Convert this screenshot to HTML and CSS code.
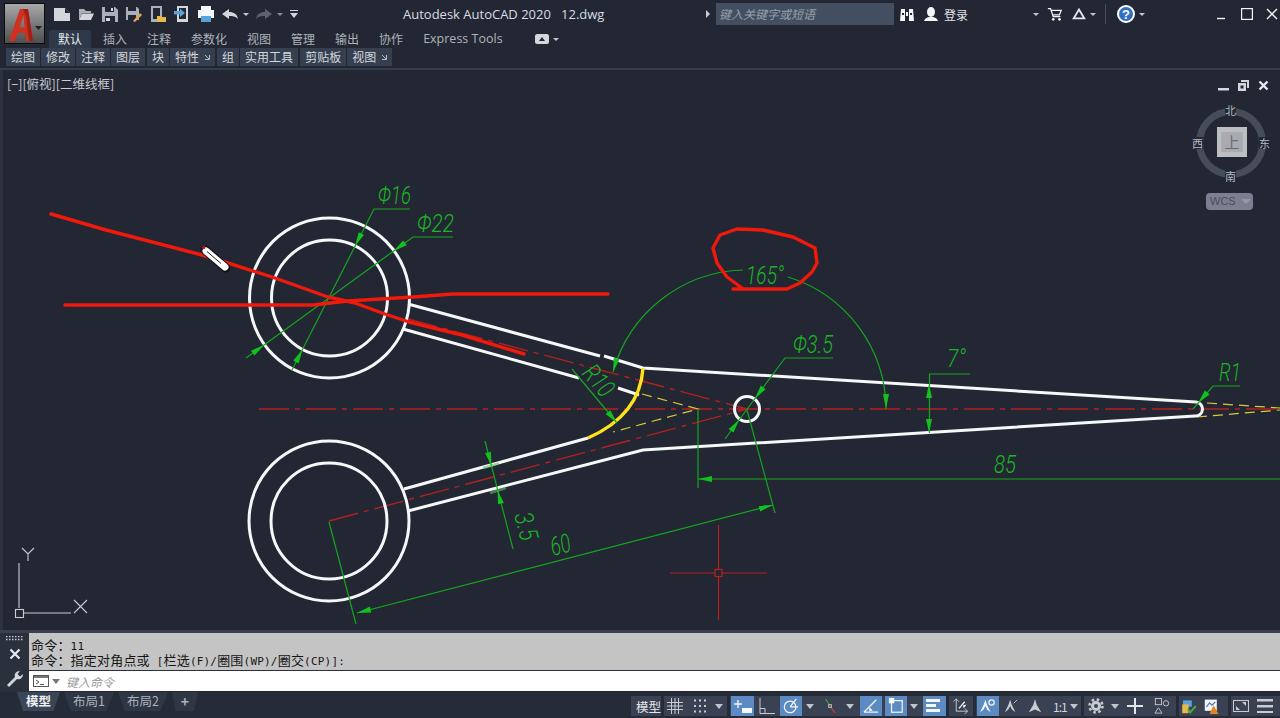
FILE: index.html
```html
<!DOCTYPE html>
<html lang="zh">
<head>
<meta charset="utf-8">
<title>Autodesk AutoCAD 2020</title>
<link rel="stylesheet" href="styles.css">
</head>
<body>
<div class="app">
  <header class="head">
    <div class="logo-col">
      <div class="logo">
        <svg width="40" height="40" viewBox="0 0 40 40"><path class="logo-a" d="M4 37 L15 5 H23 L28 37 H21 L20 29 H13 L10 37 Z M14.5 23.5 H19.5 L18.5 12 Z"/><path class="logo-b" d="M18 5 H23 L28 37 H24 L21 12 Z"/><path class="logo-c" d="M30 22 h7 l-3.5 4 z"/></svg>
      </div>
    </div>
    <div class="head-main">
      <div class="title-row">
        <div class="qat">
          <svg class="i16" viewBox="0 0 16 16"><path class="f-l" d="M0 2 H11 L16 7 V15 H0 Z"/><path class="f-d" d="M11 2 V7 H16 Z"/></svg>
          <svg class="i16" viewBox="0 0 16 16"><path class="f-m" d="M1 14 V3 H6 L8 5 H13 V7 H4 Z"/><path class="f-l" d="M1 14 L4 7.5 H16 L13 14 Z"/></svg>
          <svg class="i16" viewBox="0 0 16 16"><path class="f-m" d="M0 1 H13 L16 4 V16 H0 Z"/><path class="f-b" d="M3 1 H12 V6 H3 Z M3 10 H13 V16 H3 Z"/><path class="f-l" d="M9 2 H11 V5 H9 Z M4 12 H8 V15 H4 Z"/></svg>
          <svg class="i16" viewBox="0 0 16 16"><path class="f-m" d="M0 1 H11 L13 3 V14 H0 Z"/><path class="f-b" d="M2 1 H10 V5 H2 Z M2 9 H10 V14 H2 Z"/><path class="f-o" d="M7 15 L14 7 L16 9 L9 16 Z"/></svg>
          <svg class="i16" viewBox="0 0 16 16"><path class="f-m" d="M1 0 H12 V16 H1 Z"/><path class="f-b" d="M3 2 H10 V13 H3 Z"/><path class="f-y" d="M7 10 H11 L12 11 H16 V16 H7 Z"/></svg>
          <svg class="i16" viewBox="0 0 16 16"><path class="f-l" d="M3 0 H14 V16 H3 Z"/><path class="f-b" d="M5 2 H12 V13 H5 Z"/><path class="f-blue" d="M0 5 H6 V2.5 L11 7 L6 11 V8.5 H0 Z"/></svg>
          <svg class="i16" viewBox="0 0 16 16"><path class="f-w" d="M3 0 H13 V4 H16 V12 H13 V10 H3 V12 H0 V4 H3 Z"/><path class="f-blue" d="M3 10 H13 V16 H3 Z"/></svg>
          <svg class="i16" viewBox="0 0 16 16"><path class="f-l" d="M0 8 L7 3 V6 C12 6 15 8 16 13 C13 10 11 10 7 10 V13 Z"/></svg>
          <span class="caret sm q-c"></span>
          <svg class="i16 q-r" viewBox="0 0 16 16"><path class="f-dim" d="M16 8 L9 3 V6 C4 6 1 8 0 13 C3 10 5 10 9 10 V13 Z"/></svg>
          <span class="caret sm q-c dimmed"></span>
          <svg class="i8 q-r" viewBox="0 0 8 10"><path class="f-l" d="M0 1 H8 V2 H0 Z M0 4 H8 L4 9 Z"/></svg>
        </div>
        <div class="doc-title">Autodesk AutoCAD 2020&nbsp;&nbsp;&nbsp;12.dwg</div>
        <div class="search-group">
          <span class="tri-r"></span>
          <div class="search">键入关键字或短语</div>
          <svg class="i16 ml5" viewBox="0 0 16 16"><path class="f-w" d="M2 3 H6 V15 H1 Z M10 3 H14 L15 15 H10 Z M7 6 H9 V10 H7 Z"/><path class="f-b" d="M3 7 H5 V9 H3 Z M11 7 H13 V9 H11 Z"/></svg>
          <svg class="i16 ml8" viewBox="0 0 16 16"><ellipse class="f-w" cx="8" cy="6" rx="4" ry="5"/><path class="f-w" d="M1 15 C2 12 5 11 6 11 H10 C11 11 14 12 15 15 Z"/></svg>
          <span class="login">登录</span>
          <span class="caret sm ml-login"></span>
          <svg class="i16 ml8" viewBox="0 0 18 16"><path class="st-w" d="M1 2 H4 L7 11 H15 M5 4 H16 L14 9 H7"/><circle class="f-w" cx="7" cy="14" r="1.5"/><circle class="f-w" cx="14" cy="14" r="1.5"/></svg>
          <svg class="i16 ml8" viewBox="0 0 18 16"><path class="st-tri" d="M9 3 L15 13 H3 Z"/></svg>
          <span class="caret sm ml3"></span>
          <span class="sep"></span>
          <svg class="i20" viewBox="0 0 20 20"><circle class="f-help" cx="10" cy="10" r="8"/><text class="help-q" x="10" y="15">?</text></svg>
          <span class="caret sm ml3"></span>
          <div class="win-btns">
            <svg class="i12" viewBox="0 0 12 12"><path class="st-w" d="M1 10.5 H9"/></svg>
            <svg class="i12" viewBox="0 0 12 12"><rect class="st-w" x="0.5" y="0.5" width="11" height="11"/></svg>
            <svg class="i12" viewBox="0 0 12 12"><path class="st-w" d="M1 1 L11 11 M11 1 L1 11"/></svg>
          </div>
        </div>
      </div>
      <nav class="tabs">
        <span class="tab active">默认</span>
        <span class="tab">插入</span>
        <span class="tab">注释</span>
        <span class="tab">参数化</span>
        <span class="tab">视图</span>
        <span class="tab">管理</span>
        <span class="tab">输出</span>
        <span class="tab">协作</span>
        <span class="tab latin">Express Tools</span>
        <span class="tab-extra"><svg class="i14" viewBox="0 0 14 10"><path class="f-l" d="M0 2 C0 1 1 0 2 0 H12 C13 0 14 1 14 2 V8 C14 9 13 10 12 10 H2 C1 10 0 9 0 8 Z"/><path class="f-b" d="M4 7 L7 3 L10 7 Z"/></svg><span class="caret sm"></span></span>
      </nav>
    </div>
  </header>

  <div class="panels">
    <span class="panel">绘图</span>
    <span class="panel">修改</span>
    <span class="panel">注释</span>
    <span class="panel">图层</span>
    <span class="panel gapl">块</span>
    <span class="panel">特性<svg class="launch" viewBox="0 0 6 6"><path class="st-launch" d="M5.5 1 V5.5 H1 M1 1 L5 5"/></svg></span>
    <span class="panel gapl">组</span>
    <span class="panel">实用工具</span>
    <span class="panel gapl">剪贴板</span>
    <span class="panel">视图<svg class="launch" viewBox="0 0 6 6"><path class="st-launch" d="M5.5 1 V5.5 H1 M1 1 L5 5"/></svg></span>
  </div>

  <main class="canvas">
    <svg class="drawing" width="1280" height="560" viewBox="0 70 1280 560">
      <g class="red-c">
        <path d="M259 409 H1280"/>
        <path d="M329 521 L747 409"/>
        <path d="M408 319 L747 409"/>
      </g>
      <g class="yel-d">
        <path d="M642 394 L698 409 L613 432"/>
        <path d="M1207 403 L1280 408 M1197 417 L1280 410"/>
      </g>
      <g class="white">
        <circle cx="329.5" cy="298" r="80"/>
        <circle cx="329.5" cy="298" r="58"/>
        <circle cx="329" cy="521" r="80"/>
        <circle cx="329" cy="521" r="58"/>
        <circle cx="747" cy="409" r="12.5"/>
        <path d="M408 304 L600 356 M604 356 L643 368 L1196 402"/>
        <path d="M403 329 L579 378 M618 388 L639 395"/>
        <path d="M1196 402 A7 7 0 0 1 1195 416 L643 450 L408 511"/>
        <path d="M404 489 L588 438"/>
      </g>
      <path class="yellow" d="M643 368 Q640 415 588 438"/>
      <g class="green">
        <path d="M410 209 H374 L292 370"/>
        <path d="M453 237 H413 L246 358"/>
        <path d="M613 372 A139 139 0 0 1 743 270"/>
        <path d="M788 277 A139 139 0 0 1 886 409"/>
        <path d="M572 369 L617 423"/>
        <path d="M833 358 H785 L725 439"/>
        <path d="M970 374 H929.5 V433"/>
        <path d="M1240 386 H1213 L1193 409"/>
        <path d="M1280 479 H698 M698 409 V488"/>
        <path d="M747 410 L775 513"/>
        <path d="M773 505 L357 613"/>
        <path d="M329 522 L356 624"/>
        <path d="M485 441 L513 549"/>
        <path class="ticks" d="M483 468 L499 463.5 M490 493 L506 488"/>
      </g>
      <g class="arrows">
        <polygon points="355,246 364,235 358.7,232.3"/>
        <polygon points="302.4,349.5 298.7,363.4 293.3,360.6"/>
        <polygon points="393.7,251 406.8,245.2 403.2,240.4"/>
        <polygon points="264.1,344.9 254.6,355.5 251,350.7"/>
        <polygon points="613,372 619.6,359.3 613.8,357.7"/>
        <polygon points="886,409 889,394 883,394"/>
        <polygon points="617,423 610.3,410.3 605.7,414.1"/>
        <polygon points="754.9,398.7 765.6,389.2 760.8,385.6"/>
        <polygon points="739.4,419.6 733.5,432.6 728.7,429"/>
        <polygon points="929,384 932,398 926,398"/>
        <polygon points="929,433 932,419 926,419"/>
        <polygon points="1198,403 1209.5,394.4 1204.9,390.4"/>
        <polygon points="698,479 712,476 712,482"/>
        <polygon points="773,505 760.2,511.4 758.7,505.6"/>
        <polygon points="357,613 371.3,612.4 369.8,606.6"/>
        <polygon points="491.5,466 490.9,451.7 485.1,453.1"/>
        <polygon points="497.5,490 503.9,502.9 498.1,504.3"/>
      </g>
      <g class="dim">
        <text x="378" y="204" textLength="33" lengthAdjust="spacingAndGlyphs">Φ16</text>
        <text x="417" y="232" textLength="37" lengthAdjust="spacingAndGlyphs">Φ22</text>
        <text x="746" y="284" textLength="38" lengthAdjust="spacingAndGlyphs">165°</text>
        <text x="793" y="353" textLength="40" lengthAdjust="spacingAndGlyphs">Φ3.5</text>
        <text x="947" y="367" textLength="19" lengthAdjust="spacingAndGlyphs">7°</text>
        <text x="1219" y="381" textLength="22" lengthAdjust="spacingAndGlyphs">R1</text>
        <text x="994" y="473" textLength="22" lengthAdjust="spacingAndGlyphs">85</text>
        <text transform="translate(581,374) rotate(49)" textLength="33" lengthAdjust="spacingAndGlyphs">R10</text>
        <text transform="translate(553,556) rotate(-15)" textLength="20" lengthAdjust="spacingAndGlyphs">60</text>
        <text transform="translate(514,515) rotate(75)" textLength="28" lengthAdjust="spacingAndGlyphs">3.5</text>
      </g>
      <g class="red-thin">
        <path d="M670 573 H715 M722 573 H767 M718.5 525 V569 M718.5 577 V620"/>
        <rect x="715" y="569.5" width="7" height="7"/>
      </g>
      <g class="ink">
        <path d="M51 214 L106 230 L202 255 L225 262 L275 278 L328 297 L355 303 L382 313 L409 322 L462 335 L524 354"/>
        <path d="M65 305 H313 L348 301 L413 297 L453 294 H608"/>
        <path d="M733 289 H787 L800 283 L812 272 L817 263 L815 248 L793 237 L763 230 L737 229 L720 235 L713 248 L717 263 L727 277 L742 288"/>
      </g>
      <g class="pen">
        <path class="pen-out" d="M205 250 L226 268"/>
        <path class="pen-in" d="M206 251 L225 267"/>
        <path class="pen-line" d="M207 251.5 L221 263.5"/>
        <path class="pen-tip" d="M201 248 L205 245 L205 249 Z"/>
      </g>
      <g class="ucs">
        <path d="M19 563 V608 M24 613 H71"/>
        <rect x="15.5" y="609.5" width="8" height="8"/>
        <path d="M22 548 L28 554 L34 548 M28 554 V561"/>
        <path d="M74 600 L87 613 M87 600 L74 613"/>
      </g>
    </svg>
    <div class="view-label">[−][俯视][二维线框]</div>
    <div class="vp-btns">
      <svg class="vp-i" viewBox="0 0 11 11"><rect class="f-l" x="0" y="8" width="11" height="2.5"/></svg>
      <svg class="vp-i" viewBox="0 0 11 11"><path class="f-l" d="M3 0 H11 V8 H9 V2 H3 Z M0 3 H8 V11 H0 Z"/><path class="f-b" d="M2.5 5.5 H5.5 V8.5 H2.5 Z"/></svg>
      <svg class="vp-i" viewBox="0 0 11 11"><path class="st-x" d="M1.5 1.5 L9.5 9.5 M9.5 1.5 L1.5 9.5"/></svg>
    </div>
    <div class="cube">
      <div class="ring"></div>
      <span class="dir n">北</span>
      <span class="dir s">南</span>
      <span class="dir w">西</span>
      <span class="dir e">东</span>
      <div class="cube-face"><span>上</span></div>
      <div class="wcs">WCS<i class="wcs-tri"></i></div>
    </div>
  </main>

  <section class="cmd">
    <div class="cmd-side">
      <svg class="grip" viewBox="0 0 17 5"><path class="dots" d="M0 0.5 H17 M0 3.5 H17"/></svg>
      <svg class="cmd-x" viewBox="0 0 12 12"><path class="st-x2" d="M1.5 1.5 L10.5 10.5 M10.5 1.5 L1.5 10.5"/></svg>
      <svg class="cmd-w" viewBox="0 0 16 16"><path class="f-l" d="M0 14 L8 6 C7 3 9 0 13 0 L10.5 3 L13 5.5 L16 3 C16 7 13 9 10 8 L2 16 Z"/></svg>
    </div>
    <div class="cmd-main">
      <div class="cmd-log">
        <p class="log-line">命令：<b class="mono">11</b></p>
        <p class="log-line">命令：指定对角点或<b class="mono"> [</b>栏选<b class="mono">(F)/</b>圈围<b class="mono">(WP)/</b>圈交<b class="mono">(CP)]:</b></p>
      </div>
      <div class="cmd-input">
        <svg class="prompt" viewBox="0 0 16 12"><rect class="st-p" x="0.5" y="0.5" width="15" height="11"/><path class="f-p" d="M1 1 H15 V3 H1 Z"/><path class="st-p" d="M3 5 L6 7 L3 9 M7 9.5 H11"/></svg>
        <span class="caret grey"></span>
        <span class="ph">键入命令</span>
      </div>
    </div>
  </section>

  <footer class="status">
    <div class="layouts">
      <span class="ltab on">模型</span>
      <span class="ltab">布局1</span>
      <span class="ltab">布局2</span>
      <span class="ltab plus">+</span>
    </div>
    <div class="tray">
      <div class="grp g-model"><span class="model">模型</span></div>
      <div class="grp g2">
        <svg class="sb16" viewBox="0 0 16 16"><path class="st-s" d="M4.5 0 V16 M8 0 V16 M11.5 0 V16 M0 4.5 H16 M0 8 H16 M0 11.5 H16"/></svg>
        <svg class="sb12 ml11" viewBox="0 0 12 14"><path class="dotted" d="M0 1.5 H12 M0 7 H12 M0 12.5 H12"/></svg>
        <span class="caret ml9"></span>
      </div>
      <div class="grp g3">
        <span class="blue w23"><svg class="sb18" viewBox="0 0 18 16"><path class="st-w" d="M4 2 V10 M0 6 H8"/><rect class="f-w" x="8" y="10" width="10" height="5"/></svg></span>
        <svg class="sb16 ml5" viewBox="0 0 16 16"><path class="st-s" d="M1 0 V15.5 H16 M1 10.5 H6 V15.5"/></svg>
        <span class="blue w22 ml5"><svg class="sb18" viewBox="0 0 18 18"><circle class="st-w" cx="8" cy="10" r="6.5"/><path class="st-w" d="M8 10 L15 1 M8 10 H17"/></svg></span>
        <span class="caret ml4"></span>
        <svg class="sb16 ml8" viewBox="0 0 16 18"><path class="st-g" d="M3 1 L8 9"/><path class="st-r" d="M8 9 L14 17"/><rect class="st-s" x="6.5" y="7.5" width="3" height="3"/></svg>
        <span class="caret ml8"></span>
        <span class="blue w22 ml6"><svg class="sb18" viewBox="0 0 18 18"><path class="st-w" d="M1 16 H17 M1 16 L15 2"/><path class="f-w" d="M7 10 L11 14 L7 15 Z"/></svg></span>
        <span class="blue w22 ml3"><svg class="sb18" viewBox="0 0 18 18"><rect class="st-w" x="4" y="3" width="12" height="13"/><rect class="f-w" x="1" y="0" width="6" height="6"/></svg></span>
        <span class="caret ml3"></span>
        <span class="blue w23 ml5"><svg class="sb18" viewBox="0 0 18 16"><path class="f-w" d="M0 1 H14 V4 H0 Z M0 6 H10 V9 H0 Z M0 11 H14 V14 H0 Z"/></svg></span>
      </div>
      <div class="grp g4">
        <svg class="sb16" viewBox="0 0 16 17"><path class="st-s" d="M4 1 V14 H16 M1 4 L4 1 L7 4 M13 11 L16 14 L13 17"/><path class="st-w" d="M7 11 L13 4"/><path class="f-w" d="M11 8 L15 7 L12 11 Z"/></svg>
      </div>
      <div class="grp g5">
        <span class="blue w22"><svg class="sb18" viewBox="0 0 18 18"><path class="f-w" d="M6 2 L8 8 L12 16 L8 13 L6 9 L4 13 L0 16 L4 8 Z"/><circle class="st-w" cx="13" cy="5" r="3"/></svg></span>
        <svg class="sb16 ml4" viewBox="0 0 16 18"><path class="f-s" d="M7 2 L9 8 L13 16 L9 13 L7 9 L5 13 L1 16 L5 8 Z"/><path class="st-s" d="M11 6 L15 2"/></svg>
        <svg class="sb16 ml8" viewBox="0 0 16 18"><path class="f-s" d="M8 1 L10 8 L15 16 L8 13 L1 16 L6 8 Z"/></svg>
        <span class="scale">1:1</span>
        <span class="caret ml3"></span>
      </div>
      <div class="grp g6">
        <svg class="sb16" viewBox="0 0 16 16"><circle class="gear-o" cx="8" cy="8" r="5"/><circle class="gear-h" cx="8" cy="8" r="2"/><circle class="gear-t" cx="8" cy="8" r="6.5"/></svg>
        <span class="caret ml7"></span>
        <svg class="sb16 ml8" viewBox="0 0 16 16"><path class="st-w2" d="M8 0 V16 M0 8 H16"/></svg>
        <svg class="sb16 ml11" viewBox="0 0 16 18"><rect class="st-s" x="0.5" y="0.5" width="7" height="7"/><circle class="st-s" cx="12.5" cy="6" r="3"/><path class="st-s" d="M4 11 L8 17 H0 Z"/></svg>
      </div>
      <div class="grp g7">
        <svg class="sb18" viewBox="0 0 19 20"><path class="f-blue" d="M2 3 H13 V11 H2 Z"/><path class="f-y" d="M1 8 H9 V19 H1 Z"/><path class="st-gr" d="M8 14 L11 18 L18 10"/></svg>
        <svg class="sb18 ml5" viewBox="0 0 18 20"><path class="f-w" d="M0 2 H15 V16 H0 Z"/><path class="st-b" d="M2 11 L6 6 L9 9 L13 5"/><path class="f-or" d="M11 9 L17 20 H6 Z"/></svg>
      </div>
      <div class="grp g8">
        <svg class="sb16" viewBox="0 0 16 16"><rect class="st-s" x="0.5" y="2.5" width="15" height="11"/><path class="f-s" d="M3 12 V8 L7 12 Z M13 4 V8 L9 4 Z"/></svg>
        <svg class="sb16 ml8" viewBox="0 0 16 14"><path class="f-s" d="M0 0 H16 V2.5 H0 Z M0 6 H16 V8.5 H0 Z M0 12 H16 V14 H0 Z"/></svg>
      </div>
    </div>
  </footer>
</div>
</body>
</html>
```
FILE: styles.css
```css
* { box-sizing: border-box; }
html, body { margin: 0; padding: 0; height: 100%; overflow: hidden; }
body { background: #222733; color: #d5d8de; font-family: "Noto Sans CJK SC", "Open Sans", sans-serif; font-size: 12px; }
.app { width: 1280px; height: 718px; display: flex; flex-direction: column; }

/* header */
.head { display: flex; height: 48px; flex: none; }
.logo-col { width: 50px; padding: 3px 0 0 4px; }
.logo { width: 41px; height: 41px; border: 1px solid #0c0c0c; background: linear-gradient(#a8a8a8, #4e4e4e); }
.logo svg { display: block; }
.logo-a { fill: #d0301f; fill-rule: evenodd; }
.logo-b { fill: #a02016; }
.logo-c { fill: #1d2028; }
.head-main { flex: 1; display: flex; flex-direction: column; }
.title-row { height: 28px; display: flex; align-items: center; flex: none; }
.qat { width: 353px; padding-left: 4px; display: flex; align-items: center; gap: 8px; flex: none; }
.q-c { margin-left: -3px; }
.q-r { margin-left: -1px; }
.doc-title { width: 303px; flex: none; font-family: "Open Sans", sans-serif; font-size: 13px; color: #d9dce2; white-space: nowrap; }
.search-group { flex: 1; display: flex; align-items: center; }
.tri-r { width: 0; height: 0; border-left: 4px solid #c8ccd2; border-top: 4px solid transparent; border-bottom: 4px solid transparent; margin-right: 6px; }
.search { width: 178px; height: 22px; background: #434e60; color: #98a0ac; font-style: italic; font-size: 12px; line-height: 21px; padding-left: 3px; }
.login { margin-left: 5px; width: 24px; color: #e2e4e8; }
.ml-login { margin-left: 65px; }
.sep { width: 1px; height: 20px; background: #454c5a; margin: 0 10px 0 9px; }
.win-btns { margin-left: 71px; display: flex; gap: 13px; align-items: center; }
.i16 { width: 16px; height: 16px; flex: none; }
.i8 { width: 8px; height: 10px; flex: none; }
.i12 { width: 12px; height: 12px; flex: none; }
.i14 { width: 14px; height: 10px; flex: none; }
.i20 { width: 20px; height: 20px; flex: none; }
.ml3 { margin-left: 3px; }
.ml4 { margin-left: 4px; }
.ml5 { margin-left: 5px; }
.ml6 { margin-left: 6px; }
.ml7 { margin-left: 7px; }
.ml8 { margin-left: 8px; }
.ml9 { margin-left: 9px; }
.ml11 { margin-left: 11px; }
.caret { width: 0; height: 0; flex: none; border-top: 5px solid #c2c6cc; border-left: 4px solid transparent; border-right: 4px solid transparent; }
.caret.sm { border-top-width: 3px; border-left-width: 3px; border-right-width: 3px; }
.caret.dimmed { border-top-color: #8a8f99; }
.caret.grey { border-top-color: #777; }
.f-l { fill: #d3d6db; }
.f-m { fill: #aab0b8; }
.f-d { fill: #222733; }
.f-b { fill: #222733; }
.f-w { fill: #f4f6f8; }
.f-o { fill: #e8a050; }
.f-y { fill: #e8b84a; }
.f-blue { fill: #5aa2dc; }
.f-dim { fill: #5c6270; }
.f-s { fill: #c8ccd2; }
.f-or { fill: #e2832a; }
.f-p { fill: #777; }
.f-help { fill: #2f6fc4; stroke: #fff; stroke-width: 2; }
.help-q { fill: #fff; font: bold 13px "Liberation Sans", sans-serif; text-anchor: middle; }
.st-w { fill: none; stroke: #f2f4f6; stroke-width: 1.4; }
.st-w2 { fill: none; stroke: #e4e6ea; stroke-width: 2; }
.st-tri { fill: none; stroke: #e0e8f4; stroke-width: 2; }
.st-x { fill: none; stroke: #e8eaee; stroke-width: 2.4; }
.st-x2 { fill: none; stroke: #e8eaee; stroke-width: 2.2; }
.st-p { fill: none; stroke: #555; stroke-width: 1; }
.st-s { fill: none; stroke: #c8ccd2; stroke-width: 1; }
.st-g { fill: none; stroke: #38a838; stroke-width: 1.2; }
.st-r { fill: none; stroke: #d04040; stroke-width: 1.2; }
.st-gr { fill: none; stroke: #4aa83c; stroke-width: 2.5; }
.st-b { fill: none; stroke: #4a78b8; stroke-width: 1.5; }
.st-launch { fill: none; stroke: #b6bac2; stroke-width: 1; }

.tabs { height: 18px; margin-top: 2px; display: flex; align-items: stretch; margin-left: -1px; flex: none; }
.tab { padding: 0 10px; line-height: 18px; color: #aeb3bb; }
.tab.active { background: #2f3949; color: #e6e8ec; border-radius: 3px 3px 0 0; padding: 0 9px; margin-right: 2px; }
.tab.latin { font-family: "Open Sans", sans-serif; font-size: 12.5px; }
.tab-extra { margin-left: 22px; display: flex; align-items: center; gap: 4px; }

.panels { height: 22px; flex: none; padding-left: 6px; display: flex; gap: 1px; border-bottom: 2px solid #363d4a; }
.panel { height: 18px; padding: 0 5px; background: #353f50; color: #d4d7dc; line-height: 18px; display: flex; align-items: center; }
.panel.gapl { margin-left: 1px; }
.launch { width: 6px; height: 6px; margin-left: 5px; }

/* canvas */
.canvas { position: relative; flex: 1; background: #222733; box-shadow: inset 3px 0 0 #2c3340; overflow: hidden; min-height: 0; }
.drawing { display: block; }
.drawing path, .drawing circle, .drawing rect { fill: none; }
.red-c path { stroke: #b52020; stroke-width: 1.4; stroke-dasharray: 30 6 5 6; }
.yel-d path { stroke: #d8c93a; stroke-width: 1.2; stroke-dasharray: 10 6; }
.white path, .white circle { stroke: #f6f7f8; stroke-width: 3; }
.drawing .yellow { stroke: #ffe21a; stroke-width: 3.4; }
.green path { stroke: #16a51e; stroke-width: 1.2; }
.green .ticks { stroke: #5ec262; stroke-width: 2.5; opacity: .6; }
.arrows polygon { fill: #12c01e; }
.dim text { fill: #1ab522; font-family: "Roboto", "Liberation Sans", sans-serif; font-weight: 300; font-style: italic; font-size: 26px; }
.red-thin path, .red-thin rect { stroke: #b82020; stroke-width: 1.2; }
.ink path { stroke: #f0190c; stroke-width: 3.4; stroke-linejoin: round; stroke-linecap: round; }
.pen-out { stroke: #111; stroke-width: 9; stroke-linecap: round; }
.pen-in { stroke: #fff; stroke-width: 7; stroke-linecap: round; }
.pen-line { stroke: #222; stroke-width: 1; }
.drawing .pen-tip { fill: #c81010; }
.ucs path, .ucs rect { stroke: #c9ccd2; stroke-width: 1.1; }
.view-label { position: absolute; left: 7px; top: 5px; color: #c8cbd2; font-size: 12.5px; line-height: 18px; }
.vp-btns { position: absolute; left: 1218px; top: 10px; display: flex; gap: 9px; align-items: center; }
.vp-i { width: 11px; height: 11px; }
.cube { position: absolute; left: 1190px; top: 34px; width: 82px; height: 108px; }
.ring { position: absolute; left: 6px; top: 4px; width: 70px; height: 70px; border: 7px solid #474c59; border-radius: 50%; }
.dir { position: absolute; font-size: 11px; line-height: 12px; color: #b4b8c0; background: #222733; }
.dir.n { left: 35px; top: 0; }
.dir.s { left: 35px; top: 66px; }
.dir.w { left: 2px; top: 33px; }
.dir.e { left: 69px; top: 33px; }
.cube-face { position: absolute; left: 27px; top: 23px; width: 30px; height: 30px; background: #bdbec0; display: flex; align-items: center; justify-content: center; }
.cube-face span { width: 22px; height: 20px; background: #a9abb0; color: #6a6d74; font-size: 15px; line-height: 20px; text-align: center; }
.wcs { position: absolute; left: 16px; top: 89px; width: 47px; height: 17px; border-radius: 4px; background: #7b7f90; color: #4b4f5e; font: 11px/17px "Liberation Sans", sans-serif; padding-left: 4px; display: flex; align-items: center; gap: 5px; }
.wcs-tri { width: 0; height: 0; border-top: 5px solid #9498a8; border-left: 5px solid transparent; border-right: 5px solid transparent; }

/* command line */
.cmd { height: 62px; flex: none; display: flex; border-top: 3px solid #3a414e; background: #222733; }
.cmd-side { width: 29px; flex: none; background: #2a303c; display: flex; flex-direction: column; align-items: center; padding-top: 3px; }
.grip { width: 17px; height: 5px; display: block; }
.dots { fill: none; stroke: #c8ccd2; stroke-width: 1.5; stroke-dasharray: 1.5 1.5; }
.cmd-x { width: 12px; height: 12px; margin-top: 7px; }
.cmd-w { width: 16px; height: 16px; margin-top: 11px; }
.cmd-main { flex: 1; display: flex; flex-direction: column; }
.cmd-log { height: 37px; flex: none; background: #c4c4c4; color: #161616; padding: 4px 0 0 2px; font-size: 13px; letter-spacing: .2px; }
.log-line { margin: 0; height: 15px; line-height: 15px; white-space: pre; }
.mono { font-family: "DejaVu Sans Mono", monospace; font-size: 11px; font-weight: 400; }
.cmd-input { height: 21px; flex: none; background: #fff; border-top: 1px solid #2a303c; display: flex; align-items: center; padding-left: 4px; }
.prompt { width: 16px; height: 12px; }
.cmd-input .caret { margin-left: 3px; }
.ph { margin-left: 6px; color: #9a9a9a; font-style: italic; font-size: 12px; }

/* status */
.status { height: 26px; flex: none; background: #262b38; display: flex; justify-content: space-between; }
.layouts { display: flex; padding-left: 17px; gap: 4px; align-items: stretch; height: 19px; }
.ltab { width: 50px; background: #2f3745; color: #adb2ba; text-align: center; font-size: 12.5px; line-height: 18px; clip-path: polygon(0 0, 100% 0, 85% 100%, 14% 100%); }
.ltab.on { width: 43px; background: #3a4557; color: #eef0f2; font-weight: 700; }
.ltab.plus { width: 26px; font-weight: 700; font-size: 14px; }
.tray { display: flex; gap: 3px; padding-top: 4px; height: 24px; }
.grp { height: 20px; background: #3a4153; display: flex; align-items: center; }
.g-model { width: 30px; padding-left: 5px; }
.model { color: #e6e8ec; font-size: 12.5px; white-space: nowrap; }
.g2 { width: 63px; padding-left: 3px; }
.g3 { width: 216px; padding-left: 1px; }
.g4 { width: 24px; padding-left: 3px; }
.g5 { width: 105px; padding-left: 1px; }
.g6 { width: 92px; padding-left: 4px; }
.g7 { width: 49px; padding-left: 1px; }
.g8 { width: 49px; padding-left: 2px; }
.sb16 { width: 16px; height: 16px; flex: none; }
.sb12 { width: 12px; height: 14px; flex: none; }
.sb18 { width: 18px; height: 16px; flex: none; }
.dotted { fill: none; stroke: #c8ccd2; stroke-width: 2; stroke-dasharray: 2 3; }
.blue { height: 20px; background: #5b8bc2; display: flex; align-items: center; justify-content: center; flex: none; }
.w22 { width: 22px; }
.w23 { width: 23px; }
.scale { margin-left: 10px; color: #d4d7dc; font-size: 12px; letter-spacing: -1px; }
.gear-o { fill: #c8ccd2; stroke: none; }
.gear-h { fill: #3a4153; stroke: none; }
.gear-t { fill: none; stroke: #c8ccd2; stroke-width: 2.5; stroke-dasharray: 2.5 2.6; }
```
